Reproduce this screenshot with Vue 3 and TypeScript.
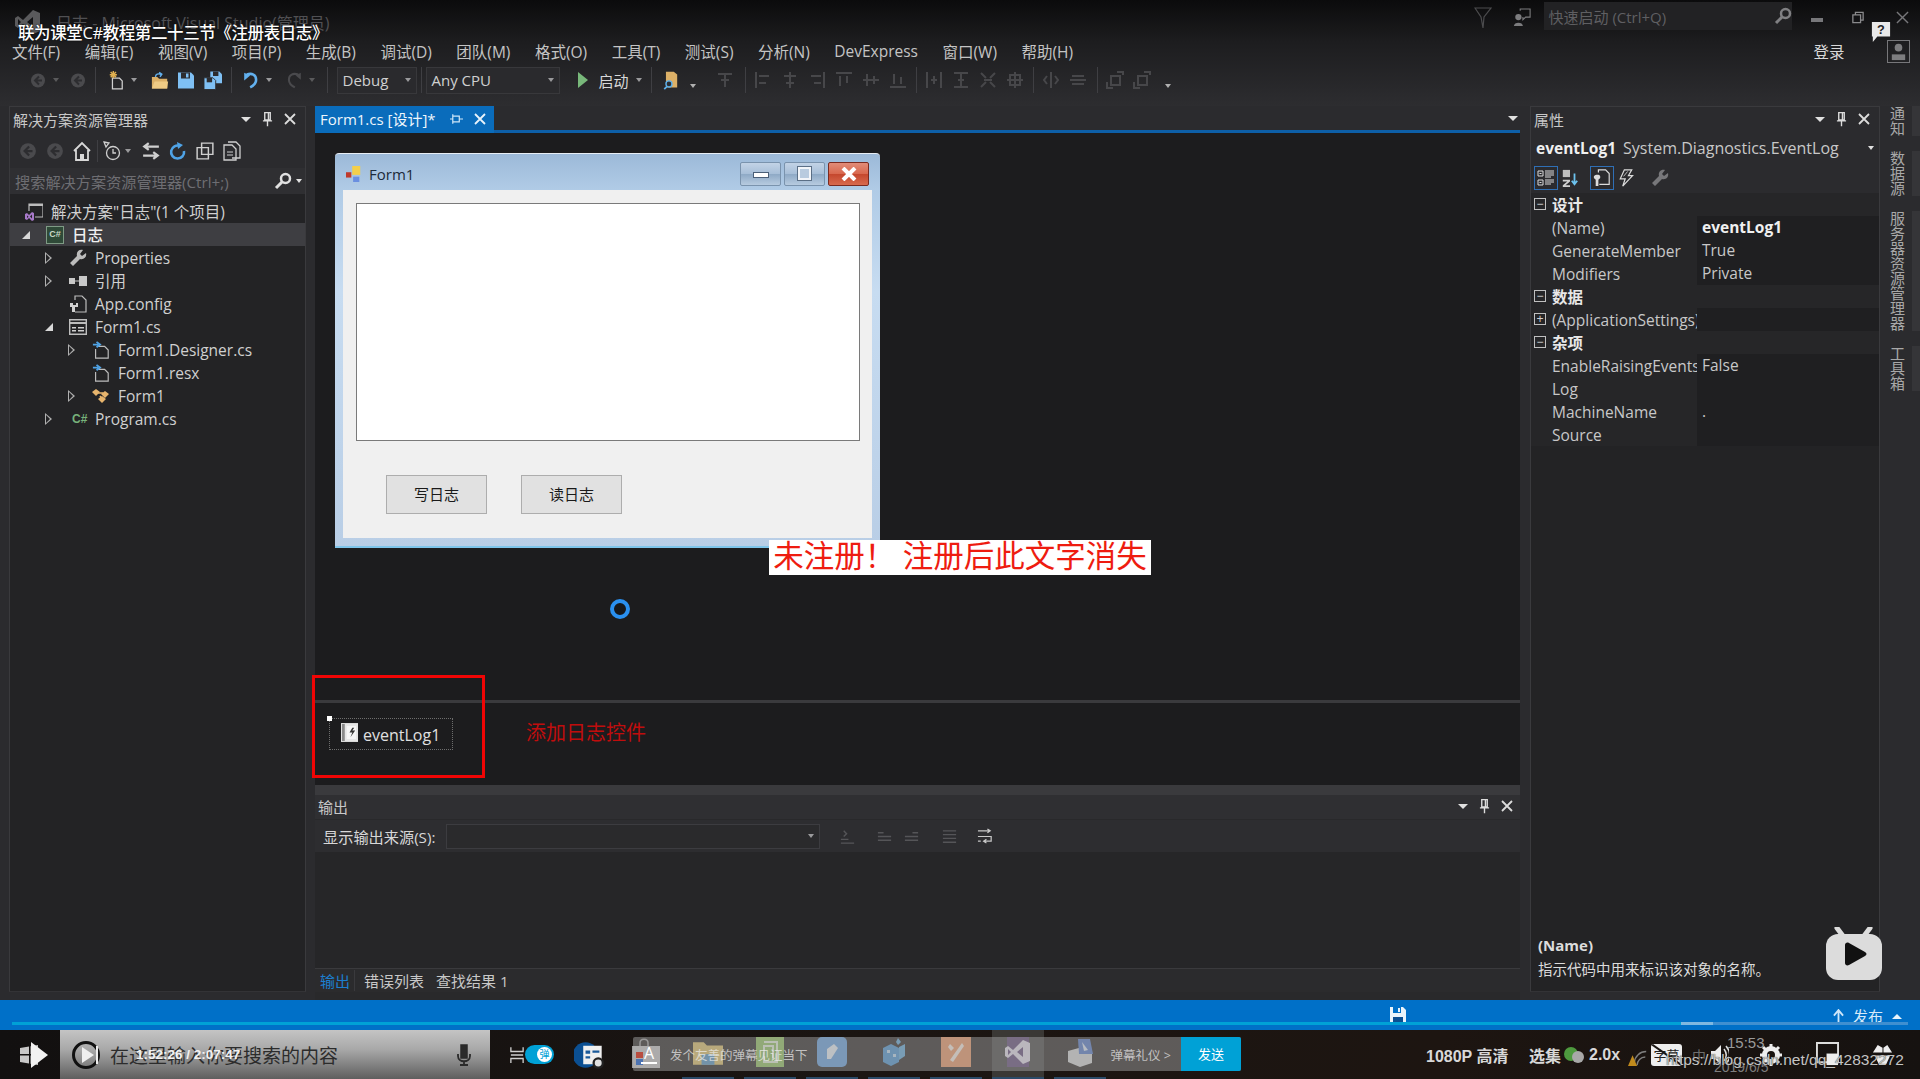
<template>
  <div class="app">
    <svg class="sprite" xmlns="http://www.w3.org/2000/svg">
      <defs>
        <symbol id="i-nav" viewBox="0 0 16 16"><circle cx="8" cy="8" r="7" fill="#4a4a4d" /><path d="M9 4 5 8l4 4M5 8h7" fill="none" stroke="#2d2d30" stroke-width="2" /></symbol>
        <symbol id="i-new" viewBox="0 0 18 22"><path d="M5 9h8l3 3v9H5z" fill="none" stroke="#d0d0d0" stroke-width="1.4" /><path d="M6 1v8M2 5h8M3 2l6 6M9 2 3 8" stroke="#e0b050" stroke-width="1.6" /></symbol>
        <symbol id="i-open" viewBox="0 0 20 20"><path d="M1 6h6l2 2h9v11H1z" fill="#dcb067" /><path d="M1 19 4 11h15l-1 8z" fill="#efcb85" /><path d="M5 6c0-3 3-4 6-3M9 1l3 2-2 3" fill="none" stroke="#62b0ee" stroke-width="1.6" /></symbol>
        <symbol id="i-save" viewBox="0 0 16 16"><path d="M0 0h13l3 3v13H0z" fill="#7fc0f4" /><path d="M3 0h9v6H3z" fill="#2d2d30" /><path d="M8 1h2.5v4H8z" fill="#7fc0f4" /></symbol>
        <symbol id="i-saveall" viewBox="0 0 20 20"><path d="M7 0h10l3 3v10H7z" fill="#7fc0f4" /><path d="M10 0h6v5h-6z" fill="#2d2d30" /><path d="M0 7h10l3 3v10H0z" fill="#7fc0f4" stroke="#2d2d30" /><path d="M3 7h6v5H3z" fill="#2d2d30" /></symbol>
        <symbol id="i-undo" viewBox="0 0 18 20"><path d="M4 3c6-2 11 0 11 6 0 4-3 7-7 9" fill="none" stroke="#62b0ee" stroke-width="3" /><path d="M1 1v9l7-6z" fill="#62b0ee" /></symbol>
        <symbol id="i-redo" viewBox="0 0 18 20"><path d="M14 3C8 1 3 3 3 9c0 4 3 7 7 9" fill="none" stroke="#4a4a4d" stroke-width="2.4" /><path d="M17 1v8l-6-5z" fill="#4a4a4d" /></symbol>
        <symbol id="i-find" viewBox="0 0 20 22"><path d="M3 1h9l4 3v15H3z" fill="#dcb067" /><circle cx="6.500" cy="15" r="3.500" fill="#2d2d30" stroke="#5ab0ee" stroke-width="1.600" /><path d="M4 18l-3 3" stroke="#5ab0ee" stroke-width="2" /></symbol>
        <symbol id="i-search" viewBox="0 0 18 18"><circle cx="11.500" cy="6.500" r="4.500" fill="none" stroke="currentColor" stroke-width="2.500" /><path d="M8 10 2 16" stroke="currentColor" stroke-width="3" /></symbol>
        <symbol id="i-pin" viewBox="0 0 12 16"><path d="M3 1h6v8H3zM1 10h10M6 10v6M7 1v8" fill="none" stroke="#dcdcdc" stroke-width="1.500" /></symbol>
        <symbol id="i-close" viewBox="0 0 12 12"><path d="M1 1l10 10M11 1 1 11" stroke="#dcdcdc" stroke-width="1.800" /></symbol>
        <symbol id="i-home" viewBox="0 0 18 20"><path d="M1 10 9 2l8 8M3 9v10h12V9" fill="none" stroke="#d8d8d8" stroke-width="1.800" /><path d="M7 13h4v6H7z" fill="#d8d8d8" /></symbol>
        <symbol id="i-history" viewBox="0 0 18 20"><circle cx="10" cy="12" r="6.500" fill="none" stroke="#cfcfcf" stroke-width="1.300" /><path d="M10 8v4h3M1 1l5 1-3 4z" fill="none" stroke="#cfcfcf" stroke-width="1.300" /></symbol>
        <symbol id="i-sync" viewBox="0 0 16 16"><path d="M15 4H3M6 1 2 4l4 3M1 12h12M10 9l4 3-4 3" fill="none" stroke="#cfcfcf" stroke-width="2" /></symbol>
        <symbol id="i-refresh" viewBox="0 0 16 20"><path d="M10 5a6.500 6.500 0 1 0 4 5" fill="none" stroke="#4fa3e6" stroke-width="2.600" /><path d="M7 1l6 3-5 4z" fill="#4fa3e6" /></symbol>
        <symbol id="i-copy" viewBox="0 0 16 16"><path d="M5 1h10v10H5zM1 5h10v10H1z" fill="#2d2d30" stroke="#cfcfcf" stroke-width="1.300" /></symbol>
        <symbol id="i-pages" viewBox="0 0 18 20"><path d="M5 1h8l4 4v12H9M1 4h8l4 4v11H1z" fill="none" stroke="#cfcfcf" stroke-width="1.300" /><path d="M4 11h6M4 14h6" stroke="#cfcfcf" /></symbol>
        <symbol id="i-wrench" viewBox="0 0 18 18"><path d="M17 4l-4 3-2-2 3-4c-4-1-7 2-6 6L1 14l3 3 7-7c4 1 7-2 6-6z" fill="currentColor" /></symbol>
        <symbol id="i-refs" viewBox="0 0 18 10"><path d="M0 2h6v6H0zM10 0h8v10h-8z" fill="#c8c8c8" /><path d="M6 5h4" stroke="#c8c8c8" /></symbol>
        <symbol id="i-config" viewBox="0 0 18 18"><path d="M6 5V1h7l4 4v12H6" fill="none" stroke="#bdbdbd" stroke-width="1.200" /><path d="M1 8h3v2h3V8h2v4H6v5H3v-5H1z" fill="#d0d0d0" /></symbol>
        <symbol id="i-form" viewBox="0 0 18 16"><path d="M.7.7h16.600v14.600H.7z" fill="none" stroke="#bdbdbd" stroke-width="1.400" /><path d="M1 3h16v2H1z" fill="#bdbdbd" /><path d="M3 8h4v1.500H3zM3 11h4v1.500H3zM9 8h6v1.500H9zM9 11h6v1.500H9z" fill="#cfcfcf" /></symbol>
        <symbol id="i-linked" viewBox="0 0 18 20"><path d="M6 6h7l4 4v9H3V9" fill="none" stroke="#bdbdbd" stroke-width="1.300" /><path d="M0 4h6M4 1l4 3-4 3" fill="none" stroke="#4fa3e6" stroke-width="2" /></symbol>
        <symbol id="i-class" viewBox="0 0 18 16"><path d="M0 4l4-3 4 3-4 4zM9 6l4-3 4 3-4 4zM6 11l4-3 4 3-4 4z" fill="#e8b56d" /><path d="M6 5h5M8 8l2 3" stroke="#e8b56d" stroke-width="1.500" /></symbol>
        <symbol id="i-sln" viewBox="0 0 18 18"><path d="M4 8V1h14v13h-8" fill="none" stroke="#bdbdbd" stroke-width="1.200" /><path d="M4 1h14v2H4z" fill="#bdbdbd" /><path d="M0 11l2-1 2 2 3-3 2 1v7l-2 1-3-3-2 2-2-1zM2 12.500v2.500l1.500-1.200zM7 11.500l-2 2 2 2z" fill="#a779c9" /></symbol>
        <symbol id="i-categorized" viewBox="0 0 18 18"><path d="M1 2h5v5H1zM1 11h5v5H1z" fill="none" stroke="#dcdcdc" /><path d="M2.500 4.500h2M2.500 13.500h2M8 2h9M8 4h9M8 6h9M8 8h6M8 11h9M8 13h9M8 15h6" stroke="#dcdcdc" /></symbol>
        <symbol id="i-alpha" viewBox="0 0 18 20"><path d="M1 1h8v8H1z" fill="#bdbdbd" /><path d="M1 12h8v2L4 18h5v2H1v-2l5-4H1z" fill="#cfcfcf" /><path d="M14 5v12M11 13l3 4 3-4" fill="none" stroke="#6cc2ee" stroke-width="2" /></symbol>
        <symbol id="i-props" viewBox="0 0 20 20"><path d="M6 4V1h8l4 4v12H7" fill="none" stroke="#dcdcdc" stroke-width="1.300" /><path d="M1 8c2-2 6-2 7 0v2L6 12v7H3v-7L1 10z" fill="#dcdcdc" /></symbol>
        <symbol id="i-bolt" viewBox="0 0 18 22"><path d="M7 1h9l-4 7h5L5 21l3-9H2z" fill="none" stroke="#dcdcdc" stroke-width="1.500" /><path d="M6 9l5-6" stroke="#dcdcdc" /></symbol>
        <symbol id="i-mic" viewBox="0 0 16 22"><path d="M5 1h6v13H5z" fill="#2a2a2a" stroke="#2a2a2a" stroke-width="1.500" /><path d="M2 10v2c0 7 12 7 12 0v-2M8 18v3M4 21h8" fill="none" stroke="#2a2a2a" stroke-width="1.800" /></symbol>
        <symbol id="i-bili" viewBox="0 0 56 54"><path d="M17 9 11 1M38 9l6-8" stroke="#dcdcdc" stroke-width="5" stroke-linecap="round" /><rect y="7" width="56" height="46" rx="12" fill="#dcdcdc" /><path d="M19 18c0-2 2-3 4-2l16 9c2 1 2 3 0 4l-16 9c-2 1-4 0-4-2z" fill="#111" /></symbol>
      </defs>
    </svg>

    <header class="chrome">
      <div class="titlebar">
        <svg class="vs-logo" viewBox="0 0 26 26"><path d="M18 1l7 3v18l-7 3-10-10-5 4-3-2V9l3-2 5 4zM18 8l-6 5 6 5zM3 10v6l3-3z" fill="#5a5a5c" /></svg>
        <span class="vs-title">日志 - Microsoft Visual Studio(管理员)</span>
        <svg class="top-ico funnel" viewBox="0 0 18 22"><path d="M1 1h16L10 10l-1 11L7 10z" fill="none" stroke="#4c4c4e" stroke-width="1.200" /></svg>
        <svg class="top-ico feedback" viewBox="0 0 20 22"><circle cx="6" cy="10" r="3.500" fill="#7d7d7f" /><path d="M1 20c0-5 10-5 10 0z" fill="#7d7d7f" /><path d="M8 3V1h11v9h-5l-3 3v-3" fill="none" stroke="#7d7d7f" stroke-width="1.200" /></svg>
        <div class="quick">
          <span>快速启动 (Ctrl+Q)</span>
          <svg class="quick-ico"><use href="#i-search" /></svg>
        </div>
        <div class="win-btns">
          <span class="w-min"></span>
          <svg class="w-restore" viewBox="0 0 14 14"><path d="M4 4V1h9v9h-3M1 4h9v9H1z" fill="none" stroke="#8a8a8c" stroke-width="1.500" /></svg>
          <svg class="w-close" viewBox="0 0 14 14"><path d="M1 1l12 12M13 1 1 13" stroke="#77777a" stroke-width="1.500" /></svg>
        </div>
      </div>
      <div class="menubar">
        <span v-for="m in menus" :key="m">{{ m }}</span>
        <span class="login">登录</span>
        <div class="avatar">
          <svg viewBox="0 0 22 22"><circle cx="11" cy="7" r="4" fill="#7d7d7f" /><path d="M4 20v-6h14v6z" fill="#7d7d7f" /></svg>
        </div>
      </div>
      <div class="toolbar">
        <svg class="ti ic16"><use href="#i-nav" /></svg><i class="drop d-dim"></i>
        <svg class="ti ic16 s6"><use href="#i-nav" /></svg>
        <b class="sep first-sep"></b>
        <svg class="ti ic-new"><use href="#i-new" /></svg><i class="drop"></i>
        <svg class="ti ic18 s9"><use href="#i-open" /></svg>
        <svg class="ti ic16 s9"><use href="#i-save" /></svg>
        <svg class="ti ic18 s10"><use href="#i-saveall" /></svg>
        <b class="sep after-save"></b>
        <svg class="ti ic16"><use href="#i-undo" /></svg><i class="drop"></i>
        <svg class="ti ic16 s9"><use href="#i-redo" /></svg><i class="drop d-dim"></i>
        <b class="sep s7"></b>
        <div class="combo c-debug"><span>Debug</span><i class="drop"></i></div>
        <b class="sep tight"></b>
        <div class="combo c-cpu"><span>Any CPU</span><i class="drop"></i></div>
        <svg class="play" viewBox="0 0 10 16"><path d="M0 0l10 8-10 8z" fill="#78b87a" /></svg>
        <span class="start">启动</span><i class="drop"></i>
        <b class="sep tight-l"></b>
        <svg class="ti ic18 s2"><use href="#i-find" /></svg>
        <i class="drop stacked"></i>
        <svg class="grey first" viewBox="0 0 18 18"><path d="M2 3h14M9 3v13M5 9h8" /></svg>
        <b class="sep g"></b>
        <svg v-for="(d, i) in alignIcons" :key="'a' + i" class="grey" viewBox="0 0 18 18"><path :d="d" /></svg>
        <b class="sep g"></b>
        <svg v-for="(d, i) in spaceIcons" :key="'s' + i" class="grey" viewBox="0 0 18 18"><path :d="d" /></svg>
        <b class="sep g"></b>
        <svg class="grey" viewBox="0 0 18 18"><path d="M9 1v16M5 5l-3 4 3 4M13 5l3 4-3 4" /></svg>
        <svg class="grey wide" viewBox="0 0 18 18"><path d="M1 9h16M3 5h12M3 13h12" /></svg>
        <b class="sep g"></b>
        <svg class="grey" viewBox="0 0 18 18"><path d="M5 5h9v9H5zM1 11v6h6M11 1h6v3" /></svg>
        <svg class="grey wide" viewBox="0 0 18 18"><path d="M5 5h9v9H5zM1 11v6h6M11 1h6v3" /></svg>
        <i class="drop stacked last"></i>
      </div>
    </header>

    <main class="workspace">
      <!-- 解决方案资源管理器 -->
      <aside class="panel explorer">
        <div class="panel-head">
          <span class="head-title">解决方案资源管理器</span>
          <i class="drop white"></i>
          <svg class="head-pin"><use href="#i-pin" /></svg>
          <svg class="head-x"><use href="#i-close" /></svg>
        </div>
        <div class="ex-tools">
          <svg class="ex-i"><use href="#i-nav" /></svg>
          <svg class="ex-i"><use href="#i-nav" /></svg>
          <svg class="ex-i"><use href="#i-home" /></svg>
          <b class="sep short"></b>
          <svg class="ex-i"><use href="#i-history" /></svg><i class="drop"></i>
          <svg class="ex-i"><use href="#i-sync" /></svg>
          <svg class="ex-i"><use href="#i-refresh" /></svg>
          <svg class="ex-i"><use href="#i-copy" /></svg>
          <svg class="ex-i"><use href="#i-pages" /></svg>
        </div>
        <div class="ex-search">
          <span>搜索解决方案资源管理器(Ctrl+;)</span>
          <svg class="ex-search-i"><use href="#i-search" /></svg>
          <i class="drop"></i>
        </div>
        <ul class="tree">
          <li
            v-for="n in tree"
            :key="n.label"
            :class="['tree-row', { selected: n.selected, root: n.level < 0 }]"
            :style="{ paddingLeft: n.level < 0 ? '0' : 12 + 23 * n.level + 'px' }"
          >
            <span class="arrow">
              <i v-if="n.arrow === 'open'" class="tri-open"></i>
              <i v-else-if="n.arrow === 'closed'" class="tri-closed"></i>
            </span>
            <span class="node-ico">
              <span v-if="n.icon === 'cs'" class="cs-text">C#</span>
              <span v-else-if="n.icon === 'proj'" class="cs-box">C#</span>
              <svg v-else><use :href="'#i-' + n.icon" /></svg>
            </span>
            <span class="node-label">{{ n.label }}</span>
          </li>
        </ul>
      </aside>

      <!-- 设计器和输出 -->
      <section class="center">
        <div class="tabs">
          <div class="tab">
            <span>Form1.cs [设计]*</span>
            <svg class="tab-pin" viewBox="0 0 14 12"><path d="M3 1v10M3 6H0M3 3h7v6H3M10 6h4" fill="none" stroke="#cfe6f8" stroke-width="1.300" /></svg>
            <svg class="tab-x" viewBox="0 0 12 12"><path d="M1 1l10 10M11 1 1 11" stroke="#e8f3fb" stroke-width="1.800" /></svg>
          </div>
          <i class="drop white tabs-drop"></i>
        </div>
        <div class="designer">
          <div class="form">
            <div class="form-title">
              <svg class="form-ico" viewBox="0 0 18 18"><path d="M0 7h6v6H0z" fill="#c0392b" /><path d="M7 0h9v10H7z" fill="#f4cf4a" /><path d="M8 12h7v6H8z" fill="#6a8fe0" /></svg>
              <span>Form1</span>
              <div class="form-btns">
                <div class="fb"><i class="fb-min"></i></div>
                <div class="fb"><i class="fb-max"></i></div>
                <div class="fb fb-close">
                  <svg viewBox="0 0 16 14"><path d="M2 1l12 12M14 1 2 13" stroke="#fff" stroke-width="4" /></svg>
                </div>
              </div>
            </div>
            <div class="form-client">
              <div class="textbox"></div>
              <div class="form-actions">
                <button class="win-btn" type="button">写日志</button>
                <button class="win-btn" type="button">读日志</button>
              </div>
            </div>
          </div>
          <div class="watermark">未注册！ 注册后此文字消失</div>
          <div class="spinner"></div>
        </div>
        <div class="tray">
          <div class="tray-item">
            <i class="handle"></i>
            <svg class="log-ico" viewBox="0 0 18 20"><path d="M0 0h18v20H0z" fill="#e6e6e6" /><path d="M1 1h3v18H1z" fill="#8a8a8a" /><path d="M6 3h10v14H6z" fill="#f6f6f6" /><path d="M12 5 9 10h3l-2 5 5-7h-3l2-3z" fill="#333" /></svg>
            <span>eventLog1</span>
          </div>
          <span class="tray-note">添加日志控件</span>
          <div class="red-box"></div>
        </div>
        <div class="output">
          <div class="output-head">
            <span class="head-title">输出</span>
            <i class="drop white"></i>
            <svg class="head-pin"><use href="#i-pin" /></svg>
            <svg class="head-x"><use href="#i-close" /></svg>
          </div>
          <div class="output-tools">
            <span class="src-label">显示输出来源(S):</span>
            <div class="src-combo"><i class="drop"></i></div>
            <svg class="out-i o1" viewBox="0 0 18 18"><path d="M2 16h14M2 12h8M5 3l3 3-3 3" fill="none" stroke="#555558" stroke-width="1.500" /></svg>
            <svg class="out-i o2" viewBox="0 0 18 18"><path d="M2 5h6M2 9h14M2 13h14" stroke="#555558" stroke-width="1.500" /></svg>
            <svg class="out-i o3" viewBox="0 0 18 18"><path d="M10 5h6M2 9h14M2 13h14" stroke="#555558" stroke-width="1.500" /></svg>
            <svg class="out-i o4" viewBox="0 0 18 18"><path d="M2 3h14M2 7h14M2 11h14M2 15h14" stroke="#555558" stroke-width="1.500" /></svg>
            <svg class="out-i o5" viewBox="0 0 18 18"><path d="M1 3h13M11 1l3 2-3 2M1 9h14v5H8M10 12l-3 2 3 2M1 14h3" fill="none" stroke="#c8c8c8" stroke-width="1.300" /></svg>
          </div>
          <div class="output-body"></div>
          <div class="output-tabs">
            <span class="out-active">输出</span>
            <span>错误列表</span>
            <span>查找结果 1</span>
          </div>
        </div>
      </section>

      <!-- 属性 -->
      <aside class="panel props">
        <div class="panel-head">
          <span class="head-title">属性</span>
          <i class="drop white"></i>
          <svg class="head-pin"><use href="#i-pin" /></svg>
          <svg class="head-x"><use href="#i-close" /></svg>
        </div>
        <div class="obj-line">
          <b>eventLog1</b>
          <span>System.Diagnostics.EventLog</span>
          <i class="drop white"></i>
        </div>
        <div class="prop-tools">
          <span class="pt on"><svg><use href="#i-categorized" /></svg></span>
          <span class="pt"><svg><use href="#i-alpha" /></svg></span>
          <span class="pt on gap"><svg><use href="#i-props" /></svg></span>
          <span class="pt"><svg><use href="#i-bolt" /></svg></span>
          <span class="pt dim gap"><svg><use href="#i-wrench" /></svg></span>
        </div>
        <div class="grid">
          <div v-for="r in propRows" :key="r.name" :class="['prop-row', { section: r.section }]">
            <span v-if="r.expander" class="expander">{{ r.expander }}</span>
            <span class="prop-name">{{ r.name }}</span>
            <span v-if="!r.section" :class="['prop-value', { strong: r.strong }]">{{ r.value }}</span>
          </div>
        </div>
        <div class="prop-desc">
          <b>(Name)</b>
          <span>指示代码中用来标识该对象的名称。</span>
        </div>
      </aside>

      <nav class="side-tabs">
        <div v-for="t in sideTabs" :key="t" class="side-tab">{{ t }}</div>
      </nav>
    </main>

    <footer class="statusbar">
      <svg class="status-save" viewBox="0 0 18 16"><path d="M1 0h13l3 3v13H1z" fill="#eaf4fb" /><path d="M4 0h8v6H4z" fill="#0070c8" /><path d="M9 1h2v4H9z" fill="#eaf4fb" /><path d="M4 10h10v6H4z" fill="#0b4f92" /></svg>
      <svg class="status-up" viewBox="0 0 12 16"><path d="M6 16V2M1 7l5-6 5 6" fill="none" stroke="#cfe6f8" stroke-width="2" /></svg>
      <span class="publish">发布</span>
      <i class="status-tri"></i>
      <div class="progress">
        <div class="p-played"></div>
        <div class="p-peek"></div>
        <div class="p-rest"></div>
      </div>
    </footer>

    <div class="taskbar">
      <svg class="start-win" viewBox="0 0 30 30"><path d="M1 8l9-1.500v7.500H1zM11.500 6.300 19 5v9h-7.500zM1 15.500h9v8L1 22zM11.500 15.500H19V25l-7.500-1.300z" fill="#c8c8c8" /><path d="M12 2l17 13-17 13z" fill="#f2f2f2" /></svg>
      <div class="search-box">
        <svg class="big-play" viewBox="0 0 30 30"><circle cx="15" cy="15" r="12.500" fill="none" stroke="#111" stroke-width="3" /><path d="M11 7l12 8-12 8z" fill="#efefef" /><path d="M26 6v18" stroke="#eee" stroke-width="2" /></svg>
        <span class="search-text">在这里输入你要搜索的内容</span>
        <svg class="mic"><use href="#i-mic" /></svg>
      </div>
      <svg class="task-view" viewBox="0 0 16 20"><path d="M1 1v5h14V1M1 19v-5h14v5M1 10h14" fill="none" stroke="#cfcfcf" stroke-width="1.500" /></svg>
      <div class="dm-toggle"><span>弹</span></div>
      <svg class="settings-ico" viewBox="0 0 26 26"><circle cx="10" cy="13" r="11" fill="#0b4f92" /><path d="M8 5h16v16H8z" fill="#f0f0f0" /><path d="M10 9h4v3h-4zM10 14h4v2h-4zM16 9h6v2h-6z" fill="#1a5a9a" /><circle cx="21" cy="20" r="4" fill="#e0e0e0" stroke="#222" stroke-width="2" /></svg>
      <div class="slots">
        <div class="slot">
          <svg viewBox="0 0 28 24"><path d="M0 3h10l3 3h15v18H0z" fill="#e3c25e" /><path d="M8 14h12v10H8z" fill="#4a90c2" /></svg>
        </div>
        <div class="slot">
          <svg viewBox="0 0 28 30"><path d="M0 0h28v30H0z" fill="#8cc152" /><path d="M8 5h13v20H8V9h9v12" fill="none" stroke="#e8f4da" stroke-width="2" /></svg>
        </div>
        <div class="slot">
          <svg viewBox="0 0 30 30"><rect width="30" height="30" rx="5" fill="#5b9bdf" /><path d="M10 22V12l7-5 4 4-7 11z" fill="#eef4fb" /></svg>
        </div>
        <div class="slot">
          <svg viewBox="0 0 30 30"><path d="M4 11l8-4 8 4v14l-8 4-8-4z" fill="#3f8fd0" /><path d="M20 10l6-3v12l-6 4zM19 1l3 4-3 3-2-3z" fill="#58a6dc" /><path d="M8 13h3v3H8zM14 17h3v3h-3z" fill="#bcdcf2" /></svg>
        </div>
        <div class="slot">
          <svg viewBox="0 0 30 30"><path d="M0 0h30v30H0z" fill="#f0915a" /><path d="M9 7l4 4-3 3-3-4zM21 6l2 3-11 16-3-2z" fill="#fdf0e4" /></svg>
        </div>
        <div class="slot current">
          <svg viewBox="0 0 26 30"><path d="M2 0h22v30H2z" fill="#6c3f96" opacity=".6" /><path d="M18 3l7 3v18l-7 3-10-10-5 4-3-2V11l3-2 5 4zM18 10l-6 5 6 5zM3 12v6l3-3z" fill="#e6e0ee" /></svg>
        </div>
        <div class="slot">
          <svg viewBox="0 0 30 30"><path d="M3 14l18-5 6 5v12l-12 4-12-5z" fill="#d8d8d8" /><path d="M13 2h12l3 15H14z" fill="#4a72c8" /><path d="M17 5l2 9 4-1z" fill="#dfe8f8" /></svg>
        </div>
      </div>

      <!-- 系统托盘，被播放器控件盖住 -->
      <div class="tray-dots"><i class="dot-green"></i><i class="dot-grey"></i></div>
      <svg class="wifi" viewBox="0 0 22 22"><path d="M10 20a9 9 0 0 1 9-9M7 17a13 13 0 0 1 13-12" fill="none" stroke="#7e7e7e" stroke-width="1.500" /><path d="M5 9 0 21h10z" fill="#c08a1c" /></svg>
      <span class="ime">中</span>

      <!-- 播放器控件盖在视频上 -->
      <div class="time-label">1:52:26 / 2:07:47</div>
      <div class="dm-input">
        <svg class="dm-bag" viewBox="0 0 28 30"><path d="M8 8V5c0-5 8-5 8 0v3" fill="none" stroke="#a8a8a8" stroke-width="1.500" /><path d="M0 8h28v22H0z" fill="#c0c0c0" /><path d="M4 14h7v6H4z" fill="#d04a3a" /><path d="M4 21h7v6H4z" fill="#4a7ac8" /></svg>
        <span class="dm-a">A</span>
        <span class="dm-hint">发个友善的弹幕见证当下</span>
        <span class="dm-rule">弹幕礼仪 &gt;</span>
        <span class="dm-send">发送</span>
      </div>
      <div class="player-right">
        <span class="pr-text q">1080P 高清</span>
        <span class="pr-text ep">选集</span>
        <span class="pr-text speed">2.0x</span>
        <div class="pr-sub"><span>字幕</span><i></i></div>
        <svg class="pr-vol" viewBox="0 0 18 24"><path d="M0 8h4l6-6v20l-6-6H0z" fill="#eee" /><path d="M13 6c3 4 3 8 0 12M15 3c5 6 5 12 0 18" fill="none" stroke="#ddd" stroke-width="1.500" /></svg>
        <svg class="pr-gear" viewBox="0 0 22 22"><circle cx="11" cy="11" r="6.500" fill="none" stroke="#eee" stroke-width="5" /><path d="M11 0v4M11 18v4M0 11h4M18 11h4M3 3l3 3M16 16l3 3M19 3l-3 3M6 16l-3 3" stroke="#eee" stroke-width="3" /></svg>
        <svg class="pr-pip" viewBox="0 0 24 26"><path d="M1 1h22v20H1z" fill="none" stroke="#ddd" stroke-width="2" /><path d="M11 12h12v12H11z" fill="#eee" /></svg>
        <svg class="pr-full" viewBox="0 0 24 24"><path d="M2 10 7 2l5 3V10zM13 5l4-3 5 8h-9zM4 13h16l-4 9H8z" fill="#eee" /></svg>
      </div>
      <span class="clock">15:53</span>
      <span class="clock-date">2019/6/5</span>
      <span class="blog-url">https://blog.csdn.net/qq_42832272</span>
    </div>

    <!-- 视频标题叠加层 -->
    <div class="video-title">联为课堂C#教程第二十三节《注册表日志》</div>
    <svg class="help-bubble" viewBox="0 0 20 22"><path d="M0 0h20v16H6l-5 6v-6H0z" fill="#e8e8e8" /><text x="10" y="13" text-anchor="middle" font-size="14" font-weight="700" fill="#222" font-family="Liberation Sans">?</text></svg>
    <svg class="bili"><use href="#i-bili" /></svg>
  </div>
</template>

<script setup lang="ts">
interface TreeNode {
  label: string
  level: number
  icon: string
  arrow?: 'open' | 'closed'
  selected?: boolean
}

interface PropRow {
  name: string
  value?: string
  section?: boolean
  expander?: string
  strong?: boolean
}

const menus = [
  '文件(F)', '编辑(E)', '视图(V)', '项目(P)', '生成(B)', '调试(D)', '团队(M)',
  '格式(O)', '工具(T)', '测试(S)', '分析(N)', 'DevExpress', '窗口(W)', '帮助(H)'
]

const alignIcons = [
  'M2 1v16M5 5h10M5 12h7', 'M9 1v16M3 5h12M5 12h8', 'M16 1v16M3 5h10M6 12h7',
  'M1 2h16M5 5v10M12 5v7', 'M1 9h16M5 3v12M12 5v8', 'M1 16h16M5 3v10M12 6v7'
]

const spaceIcons = [
  'M2 1v16M16 1v16M9 5v8M6 9h6', 'M2 2h14M2 16h14M9 2v14M6 9h6',
  'M2 2l5 5M16 2l-5 5M2 16l5-5M16 16l-5-5M5 9h8', 'M4 4h10v10H4zM9 1v16M1 9h16'
]

const tree: TreeNode[] = [
  { label: '解决方案"日志"(1 个项目)', level: -1, icon: 'sln' },
  { label: '日志', level: 0, icon: 'proj', arrow: 'open', selected: true },
  { label: 'Properties', level: 1, icon: 'wrench', arrow: 'closed' },
  { label: '引用', level: 1, icon: 'refs', arrow: 'closed' },
  { label: 'App.config', level: 1, icon: 'config' },
  { label: 'Form1.cs', level: 1, icon: 'form', arrow: 'open' },
  { label: 'Form1.Designer.cs', level: 2, icon: 'linked', arrow: 'closed' },
  { label: 'Form1.resx', level: 2, icon: 'linked' },
  { label: 'Form1', level: 2, icon: 'class', arrow: 'closed' },
  { label: 'Program.cs', level: 1, icon: 'cs', arrow: 'closed' }
]

const propRows: PropRow[] = [
  { name: '设计', section: true, expander: '−' },
  { name: '(Name)', value: 'eventLog1', strong: true },
  { name: 'GenerateMember', value: 'True' },
  { name: 'Modifiers', value: 'Private' },
  { name: '数据', section: true, expander: '−' },
  { name: '(ApplicationSettings)', value: '', expander: '+' },
  { name: '杂项', section: true, expander: '−' },
  { name: 'EnableRaisingEvents', value: 'False' },
  { name: 'Log', value: '' },
  { name: 'MachineName', value: '.' },
  { name: 'Source', value: '' }
]

const sideTabs = ['通知', '数据源', '服务器资源管理器', '工具箱']
</script>

<style>
html,
body {
  margin: 0;
  background: #2d2d30;
}
</style>

<style scoped>
* {
  box-sizing: border-box;
}

.sprite {
  display: none;
}

.app {
  position: relative;
  display: flex;
  flex-direction: column;
  width: 1920px;
  height: 1079px;
  overflow: hidden;
  background: #2b2b2e;
  color: #c8c8c8;
  font-family: "Open Sans", "Noto Sans CJK SC", sans-serif;
  font-size: 15.500px;
}

/* ---------- 顶部 ---------- */
.chrome {
  height: 106px;
  flex: none;
  background: linear-gradient(#0b0b0c, #1d1d1f 40%, #2d2d30 100%);
}

.titlebar {
  position: relative;
  display: flex;
  align-items: flex-start;
  height: 39px;
  padding-left: 15px;
}

.vs-logo {
  width: 26px;
  height: 26px;
  margin-top: 9px;
}

.vs-title {
  margin: 10px 0 0 15px;
  font-size: 16px;
  color: #505053;
  white-space: nowrap;
}

.top-ico {
  width: 18px;
  height: 22px;
  margin-top: 7px;
}

.funnel {
  margin-left: 1144px;
}

.feedback {
  margin-left: 21px;
}

.quick {
  display: flex;
  align-items: center;
  justify-content: space-between;
  width: 248px;
  height: 28px;
  margin: 2px 0 0 13px;
  padding: 0 0 0 5px;
  color: #5f5f62;
  font-size: 15px;
  background: #222224;
}

.quick-ico {
  width: 18px;
  height: 18px;
  color: #808083;
}

.win-btns {
  display: flex;
  align-items: center;
  height: 28px;
  margin: 3px 0 0 19px;
}

.w-min {
  width: 12px;
  height: 4px;
  margin-top: 6px;
  background: #77777a;
}

.w-restore {
  width: 12px;
  height: 13px;
  margin-left: 29px;
}

.w-close {
  width: 13px;
  height: 13px;
  margin-left: 32px;
}

.menubar {
  display: flex;
  align-items: center;
  gap: 24.500px;
  height: 24px;
  padding: 0 10px 0 12px;
  font-size: 15.500px;
  color: #c4c4c4;
  white-space: nowrap;
}

.login {
  margin-left: auto;
  color: #d8d8d8;
}

.avatar {
  width: 23px;
  height: 23px;
  margin-left: 18px;
  border: 1px solid #77777a;
}

.avatar svg {
  display: block;
  width: 100%;
  height: 100%;
}

.toolbar {
  display: flex;
  align-items: center;
  height: 34px;
  padding-left: 30px;
  white-space: nowrap;
}

.ti {
  flex: none;
}

.ic16 {
  width: 16px;
  height: 17px;
}

.ic18 {
  width: 18px;
  height: 19px;
}

.ic-new {
  width: 16px;
  height: 20px;
}

.s2 {
  margin-left: 2px;
}

.s6 {
  margin-left: 6px;
}

.s9 {
  margin-left: 9px;
}

.s10 {
  margin-left: 10.500px;
}

.drop {
  display: inline-block;
  flex: none;
  width: 0;
  height: 0;
  margin: 0 5px 0 7px;
  border-left: 3.500px solid transparent;
  border-right: 3.500px solid transparent;
  border-top: 4px solid #9a9a9c;
}

.d-dim {
  border-top-color: #5a5a5c;
}

.drop.white {
  border-left-width: 5px;
  border-right-width: 5px;
  border-top: 5px solid #e0e0e0;
}

.stacked {
  margin-top: 12px;
  margin-left: 9px;
  border-top-color: #b0b0b0;
}

.sep {
  flex: none;
  width: 1px;
  height: 26px;
  margin: 0 9px;
  background: #3f3f43;
}

.first-sep {
  margin-right: 11.500px;
}

.after-save {
  margin-right: 10.500px;
}

.sep.s7 {
  margin-left: 7px;
}

.sep.tight {
  margin: 0 4px;
}

.sep.tight-l {
  margin-left: 4px;
}

.sep.short {
  height: 22px;
  margin: 0 -3.500px;
}

.sep.g {
  margin: 0 8px 0 0;
}

.combo {
  display: flex;
  align-items: center;
  justify-content: space-between;
  height: 27px;
  padding: 0 0 0 5px;
  color: #d0d0d0;
  font-size: 15px;
  background: #2a2a2d;
  border: 1px solid #38383b;
}

.c-debug {
  width: 80px;
}

.c-cpu {
  width: 134px;
}

.play {
  flex: none;
  width: 10px;
  height: 16px;
  margin-left: 18px;
}

.start {
  margin-left: 11px;
  color: #d8d8d8;
  font-size: 15px;
}

.grey {
  flex: none;
  width: 18px;
  height: 18px;
  margin-right: 9px;
  fill: none;
  stroke: #47474a;
  stroke-width: 2;
}

.grey.first {
  margin-left: 15px;
  margin-right: 11px;
}

.grey.wide {
  margin-right: 10px;
}

.last {
  margin-left: 4px;
}

/* ---------- 主区域 ---------- */
.workspace {
  display: flex;
  flex: none;
  height: 894px;
  padding-left: 9px;
}

.panel {
  display: flex;
  flex-direction: column;
  flex: none;
  height: 886px;
  background: #252527;
  border: 1px solid #3a3a3d;
  border-bottom-color: #333336;
}

.panel-head,
.output-head {
  display: flex;
  align-items: center;
  flex: none;
  height: 26px;
  padding: 0 9px 2px 3px;
  background: #2b2b2e;
}

.head-title {
  flex: 1;
  color: #c8c8c8;
  font-size: 15px;
}

.panel-head .drop,
.output-head .drop {
  margin: 0;
}

.head-pin {
  width: 11px;
  height: 16px;
  margin-left: 11px;
}

.head-x {
  width: 12px;
  height: 12px;
  margin-left: 11px;
}

.explorer {
  width: 297px;
  background: #232325;
}

.ex-tools {
  display: flex;
  align-items: center;
  gap: 9px;
  flex: none;
  height: 35px;
  padding-left: 9px;
  background: #2b2b2e;
}

.ex-tools .drop {
  margin: 0 2px 0 -5px;
}

.ex-i {
  width: 18px;
  height: 20px;
  flex: none;
}

.ex-search {
  display: flex;
  align-items: center;
  flex: none;
  height: 26px;
  padding-left: 5px;
  color: #6e6e72;
  font-size: 15.200px;
  white-space: nowrap;
  background: #2f2f32;
}

.ex-search span {
  flex: 1;
}

.ex-search-i {
  width: 18px;
  height: 18px;
  color: #e0e0e0;
}

.ex-search .drop {
  margin: 0 3px 0 4px;
  border-top-color: #e0e0e0;
}

.tree {
  margin: 6px 0 0;
  padding: 0;
  list-style: none;
}

.tree-row {
  display: flex;
  align-items: center;
  height: 23px;
  color: #d0d0d0;
  white-space: nowrap;
}

.tree-row.selected {
  background: #3e3e42;
  color: #f0f0f0;
  font-weight: 500;
}

.arrow {
  display: flex;
  align-items: center;
  flex: none;
  width: 24px;
}

.root .arrow {
  width: 15px;
}

.tri-open {
  width: 0;
  height: 0;
  border-left: 8px solid transparent;
  border-bottom: 8px solid #d8d8d8;
}

.tri-closed {
  width: 0;
  height: 0;
  border-top: 6px solid transparent;
  border-bottom: 6px solid transparent;
  border-left: 7px solid #b0b0b0;
  position: relative;
}

.tri-closed::after {
  content: "";
  position: absolute;
  top: -4px;
  left: -6px;
  border-top: 4px solid transparent;
  border-bottom: 4px solid transparent;
  border-left: 4.500px solid #232325;
}

.node-ico {
  display: flex;
  align-items: center;
  flex: none;
  width: 26px;
  height: 20px;
  color: #bcbcbc;
}

.node-ico svg {
  width: 18px;
  height: 18px;
}

.cs-text {
  margin-left: 3px;
  color: #77b27b;
  font: 700 12px "Liberation Sans", sans-serif;
}

.cs-box {
  display: block;
  width: 18px;
  height: 18px;
  color: #c8d8c8;
  font: 700 9px/15px "Liberation Sans", sans-serif;
  text-align: center;
  background: #2f4a38;
  border: 1px solid #7f9b85;
}

.center {
  display: flex;
  flex-direction: column;
  flex: none;
  width: 1205px;
  margin-left: 9px;
}

.tabs {
  display: flex;
  align-items: center;
  justify-content: space-between;
  flex: none;
  height: 27px;
  border-bottom: 3px solid #0d5fa8;
  padding-right: 2px;
}

.tab {
  display: flex;
  align-items: center;
  width: 179px;
  height: 27px;
  margin-bottom: -3px;
  padding: 0 0 2px 5px;
  color: #eef6fc;
  font-size: 15px;
  background: #0a6cbb;
  white-space: nowrap;
}

.tab-pin {
  width: 13px;
  height: 12px;
  margin-left: 14px;
}

.tab-x {
  width: 12px;
  height: 12px;
  margin-left: 11px;
}

.tabs-drop {
  margin: 0;
}

.designer {
  position: relative;
  flex: none;
  height: 570px;
  padding: 20px 20px;
  background: #1c1c1e;
  border-bottom: 3px solid #3a3a3d;
}

.form {
  display: flex;
  flex-direction: column;
  width: 545px;
  height: 395px;
  padding: 0 8px 8px;
  border-radius: 4px 4px 0 0;
  background: linear-gradient(#9cb9d8, #b0cbe6 9%, #c7dcf1 35%, #b9cee6 100%);
  border-top: 1px solid #e8eef5;
  border-bottom: 2px solid #7fc5ea;
}

.form-title {
  display: flex;
  align-items: center;
  flex: none;
  height: 36px;
  padding: 4px 3px 0;
  color: #1c2a3a;
  font-size: 15px;
}

.form-ico {
  width: 16px;
  height: 16px;
}

.form-title > span {
  margin-left: 7px;
}

.form-btns {
  display: flex;
  gap: 3px;
  margin-left: auto;
  margin-top: -1px;
}

.fb {
  display: flex;
  align-items: center;
  justify-content: center;
  width: 41px;
  height: 24px;
  border: 1px solid #7a93ad;
  border-radius: 2px;
  background: linear-gradient(#c2d3e6, #a8bfd8 48%, #8faac6 52%, #b7cbe0);
}

.fb-min {
  width: 16px;
  height: 6px;
  margin-top: 2px;
  background: #fff;
  border: 1px solid #4a5f78;
}

.fb-max {
  width: 13px;
  height: 13px;
  background: #b8cbdf;
  border: 2px solid #f2f5f9;
  outline: 1px solid #5b6f86;
}

.fb-close {
  background: linear-gradient(#e28c78, #d9694f 48%, #c5482e 52%, #d86a4e);
  border-color: #7a2a20;
}

.fb-close svg {
  width: 16px;
  height: 14px;
}

.form-client {
  display: flex;
  flex-direction: column;
  flex: 1;
  padding: 13px 13px 0;
  background: #f0f0f0;
}

.textbox {
  flex: none;
  width: 504px;
  height: 238px;
  background: #fff;
  border: 1px solid #7a7a7a;
}

.form-actions {
  display: flex;
  gap: 34px;
  margin: 34px 0 0 30px;
}

.win-btn {
  width: 101px;
  height: 39px;
  padding: 0 0 3px;
  color: #1a1a1a;
  font: 15px "Noto Sans CJK SC", sans-serif;
  background: #e1e1e1;
  border: 1px solid #adadad;
}

.watermark {
  position: absolute;
  left: 454px;
  top: 407px;
  width: 382px;
  height: 35px;
  color: #ee1c10;
  font: 400 30.500px/35px "Liberation Serif", "Noto Sans CJK SC", serif;
  text-align: center;
  white-space: nowrap;
  background: #fff;
}

.spinner {
  position: absolute;
  left: 295px;
  top: 466px;
  width: 20px;
  height: 20px;
  border: 4.500px solid #2a90f0;
  border-radius: 50%;
  background: #16181c;
}

.tray {
  position: relative;
  display: flex;
  align-items: flex-start;
  flex: none;
  height: 92px;
  background: #1c1c1e;
  border-bottom: 10px solid #3a3a3d;
}

.tray-item {
  position: relative;
  display: flex;
  align-items: center;
  width: 124px;
  height: 32px;
  margin: 15px 0 0 14px;
  padding-left: 11px;
  color: #e0e0e0;
  font-size: 16px;
  border: 1px dotted #6e6e6e;
}

.tray-item span {
  margin: 2px 0 0 5px;
}

.handle {
  position: absolute;
  left: -3px;
  top: -3px;
  width: 5px;
  height: 5px;
  background: #fff;
}

.log-ico {
  width: 17px;
  height: 19px;
  margin-top: -4px;
}

.tray-note {
  margin: 16px 0 0 73px;
  color: #c00d0d;
  font: 400 20px/28px "Liberation Serif", "Noto Sans CJK SC", serif;
}

.red-box {
  position: absolute;
  left: -3px;
  top: -28px;
  width: 173px;
  height: 103px;
  border: 3px solid #f00505;
}

.output {
  display: flex;
  flex-direction: column;
  flex: 1;
  background: #29292b;
}

.output-head {
  height: 24px;
  padding-right: 7px;
  background: #2f2f32;
}

.output-tools {
  display: flex;
  align-items: center;
  flex: none;
  height: 32px;
  margin-top: 1px;
  padding-left: 8px;
  background: #2d2d30;
}

.src-label {
  width: 123px;
  color: #d8d8d8;
  font-size: 15.200px;
  white-space: nowrap;
}

.src-combo {
  display: flex;
  align-items: center;
  justify-content: flex-end;
  width: 374px;
  height: 25px;
  background: #2a2a2c;
  border: 1px solid #3c3c40;
}

.src-combo .drop {
  margin: 0 5px 0 0;
}

.out-i {
  width: 17px;
  height: 17px;
}

.o1 {
  margin-left: 19px;
}

.o2 {
  margin-left: 20px;
}

.o3 {
  margin-left: 10px;
}

.o4 {
  margin-left: 21px;
}

.o5 {
  margin-left: 19px;
}

.output-body {
  flex: 1;
  background: #262628;
}

.output-tabs {
  display: flex;
  align-items: center;
  gap: 12px;
  flex: none;
  height: 24px;
  padding-left: 5px;
  color: #c8c8c8;
  font-size: 15px;
  background: #2b2b2d;
  border-top: 1px solid #3a3a3d;
  margin-bottom: 8px;
}

.out-active {
  margin-right: -3px;
  padding-right: 4px;
  color: #1c7fd0;
  border-right: 1px solid #3a3a3d;
}

.props {
  width: 350px;
  margin-left: 10px;
  background: #232325;
}

.obj-line {
  display: flex;
  align-items: center;
  flex: none;
  height: 29px;
  padding: 0 5px 0 5px;
  background: #2b2b2e;
  white-space: nowrap;
}

.obj-line b {
  color: #f0f0f0;
  font-weight: 700;
  font-size: 15.500px;
}

.obj-line span {
  flex: 1;
  margin-left: 7px;
  color: #c8c8c8;
  font-size: 16px;
}

.obj-line .drop {
  margin: 0;
  border-left-width: 3.500px;
  border-right-width: 3.500px;
  border-top-width: 4px;
}

.prop-tools {
  display: flex;
  align-items: center;
  flex: none;
  gap: 0;
  height: 31px;
  padding-left: 3px;
  background: #2b2b2e;
}

.pt {
  display: flex;
  align-items: center;
  justify-content: center;
  width: 24px;
  height: 24px;
  color: #cfcfcf;
  border: 1px solid transparent;
}

.pt.on {
  border-color: #2f6fb5;
}

.pt.gap {
  margin-left: 8px;
}

.pt.dim {
  margin-left: 10px;
  color: #77777a;
}

.pt svg {
  width: 18px;
  height: 18px;
}

.grid {
  flex: none;
}

.prop-row {
  display: flex;
  position: relative;
  align-items: center;
  height: 23px;
  padding-left: 21px;
  background: #262628;
  white-space: nowrap;
}

.prop-row.section {
  color: #e0e0e0;
  font-weight: 700;
}

.expander {
  position: absolute;
  left: 3px;
  top: 5px;
  width: 12px;
  height: 12px;
  color: #d0d0d0;
  font: 400 12px/10px "Liberation Sans", sans-serif;
  text-align: center;
  border: 1px solid #c0c0c0;
}

.prop-name {
  flex: none;
  width: 145px;
  overflow: hidden;
  color: #c8c8c8;
}

.section .prop-name {
  color: #e8e8e8;
}

.prop-value {
  flex: 1;
  align-self: stretch;
  padding-left: 5px;
  line-height: 23px;
  color: #c8c8c8;
  background: #1f1f21;
}

.prop-value.strong {
  color: #f0f0f0;
  font-weight: 700;
}

.prop-desc {
  display: flex;
  flex-direction: column;
  gap: 3px;
  margin-top: auto;
  padding: 0 0 12px 7px;
  font-size: 14.500px;
  color: #dcdcdc;
}

.prop-desc b {
  font-weight: 700;
  font-size: 15px;
}

.side-tabs {
  display: flex;
  flex-direction: column;
  gap: 15px;
  flex: none;
  width: 40px;
}

.side-tab {
  padding-right: 13px;
  background: linear-gradient(90deg, transparent 32px, #353538 32px);
  color: #a8a8a8;
  font-size: 15px;
  line-height: 20px;
  writing-mode: vertical-rl;
}

/* ---------- 底部 ---------- */
.statusbar {
  position: relative;
  display: flex;
  align-items: flex-start;
  flex: none;
  height: 30px;
  background: #0070c8;
  color: #d6e9f8;
}

.status-save {
  width: 18px;
  height: 16px;
  margin: 7px 0 0 1389px;
}

.status-up {
  width: 11px;
  height: 15px;
  margin: 9px 0 0 426px;
}

.publish {
  margin: 5px 0 0 9px;
  font-size: 15px;
  line-height: 22px;
}

.status-tri {
  width: 0;
  height: 0;
  margin: 14px 0 0 9px;
  border-left: 5px solid transparent;
  border-right: 5px solid transparent;
  border-bottom: 5px solid #e8f3fb;
}

.progress {
  position: absolute;
  left: 12px;
  top: 22px;
  display: flex;
  width: 1896px;
  height: 3px;
}

.p-played {
  width: 1669px;
  background: #00a1d6;
}

.p-peek {
  width: 32px;
  background: #7fb8e0;
}

.p-rest {
  flex: 1;
  background: #3f8fd0;
}

.taskbar {
  position: relative;
  display: flex;
  align-items: center;
  flex: 1;
  background: linear-gradient(90deg, #121010, #1b1512 45%, #1d1511 75%, #161210);
}

.start-win {
  flex: none;
  width: 30px;
  height: 30px;
  margin-left: 19px;
}

.search-box {
  display: flex;
  align-items: center;
  flex: none;
  width: 430px;
  height: 49px;
  margin-left: 11px;
  background: linear-gradient(#c4c4c4, #a8a8a8 40%, #5e5e5e);
}

.big-play {
  flex: none;
  width: 30px;
  height: 30px;
  margin-left: 11px;
}

.search-text {
  margin-left: 9px;
  color: #2c2c2c;
  font-size: 19px;
  white-space: nowrap;
}

.mic {
  width: 16px;
  height: 24px;
  margin-left: auto;
  margin-right: 18px;
}

.task-view {
  flex: none;
  width: 14px;
  height: 20px;
  margin-left: 20px;
}

.dm-toggle {
  display: flex;
  align-items: center;
  justify-content: flex-end;
  flex: none;
  width: 29px;
  height: 19px;
  margin-left: 1px;
  padding-right: 2px;
  border-radius: 10px;
  background: #00a1d6;
}

.dm-toggle span {
  width: 15px;
  height: 15px;
  color: #00a1d6;
  font-size: 10px;
  line-height: 15px;
  text-align: center;
  border-radius: 50%;
  background: #fff;
}

.settings-ico {
  flex: none;
  width: 30px;
  height: 30px;
  margin-left: 20px;
}

.slots {
  display: flex;
  gap: 10px;
  flex: none;
  height: 49px;
  margin-left: 78px;
}

.slot {
  display: flex;
  align-items: center;
  justify-content: center;
  width: 52px;
  height: 49px;
  padding-bottom: 3px;
  border-bottom: 2px solid #2b4a68;
}

.slot.current {
  background: #3a3835;
}

.slot svg {
  width: 30px;
  height: 30px;
}

.tray-dots {
  position: relative;
  display: flex;
  margin-left: 458px;
}

.dot-green {
  width: 14px;
  height: 14px;
  border-radius: 50%;
  background: #4e9a3e;
}

.dot-grey {
  width: 12px;
  height: 12px;
  margin: 4px 0 0 -6px;
  border-radius: 50%;
  background: #a8a8a8;
}

.wifi {
  flex: none;
  width: 20px;
  height: 20px;
  margin: 4px 0 0 44px;
}

.ime {
  margin-left: 44px;
  color: #6e6e6e;
  font-size: 14px;
}

.time-label {
  position: absolute;
  left: 136px;
  top: 16px;
  color: #f2f2f2;
  font: 700 13.500px/18px "Liberation Sans", sans-serif;
  white-space: nowrap;
}

.dm-input {
  position: absolute;
  left: 633px;
  top: 7px;
  display: flex;
  align-items: center;
  width: 608px;
  height: 34px;
  border-radius: 2px;
  background: rgba(150, 150, 150, 0.55);
  color: rgba(240, 240, 240, 0.7);
  font-size: 12.500px;
}

.dm-bag {
  position: absolute;
  left: -1px;
  top: 1px;
  width: 28px;
  height: 30px;
  opacity: 0.8;
}

.dm-a {
  position: relative;
  width: 16px;
  margin-left: 8px;
  color: #fff;
  font: 500 16px/18px "Open Sans", sans-serif;
  text-align: center;
  border-bottom: 2px solid #fff;
}

.dm-hint {
  margin-left: 13px;
  white-space: nowrap;
}

.dm-rule {
  margin-left: auto;
  margin-right: 10px;
  white-space: nowrap;
}

.dm-send {
  width: 60px;
  height: 34px;
  color: #fff;
  font-size: 13px;
  line-height: 34px;
  text-align: center;
  border-radius: 0 2px 2px 0;
  background: #00a1d6;
}

.player-right {
  position: absolute;
  left: 1426px;
  top: 0;
  bottom: 0;
  display: flex;
  align-items: center;
}

.pr-text {
  color: #d8d8d8;
  font: 700 16px "Liberation Sans", "Noto Sans CJK SC", sans-serif;
  white-space: nowrap;
}

.pr-text.q {
  width: 82px;
}

.pr-text.ep {
  width: 32px;
  margin-left: 21px;
}

.pr-text.speed {
  width: 32px;
  margin-left: 28px;
}

.pr-sub {
  position: relative;
  width: 31px;
  height: 22px;
  margin: 0 9px 0 30px;
  overflow: hidden;
  color: #222;
  font-size: 13px;
  line-height: 22px;
  text-align: center;
  border-radius: 3px;
  background: #eee;
}

.pr-sub i {
  position: absolute;
  left: -4px;
  top: 10px;
  width: 40px;
  height: 2px;
  background: #1a1512;
  transform: rotate(35deg);
}

.pr-vol {
  width: 18px;
  height: 24px;
  margin-left: 20px;
}

.pr-gear {
  width: 22px;
  height: 22px;
  margin-left: 31px;
}

.pr-pip {
  width: 23px;
  height: 25px;
  margin-left: 34px;
}

.pr-full {
  width: 23px;
  height: 23px;
  margin-left: 32px;
}

.clock,
.clock-date,
.blog-url {
  position: absolute;
  white-space: nowrap;
  font-family: "Liberation Sans", sans-serif;
}

.clock {
  left: 1727px;
  top: 4px;
  color: #9a9a9a;
  font-size: 15px;
}

.clock-date {
  left: 1714px;
  top: 29px;
  color: #7e7e7e;
  font-size: 14px;
}

.blog-url {
  left: 1666px;
  top: 21px;
  color: #c4c4c4;
  font-size: 15.500px;
  text-shadow: 0 0 1px #1a1512;
}

.video-title {
  position: absolute;
  left: 18px;
  top: 21px;
  color: #fff;
  font-size: 16.500px;
  font-weight: 500;
  line-height: 24px;
  letter-spacing: -0.400px;
  text-shadow: 0 0 2px #000;
  white-space: nowrap;
}

.help-bubble {
  position: absolute;
  left: 1871px;
  top: 22px;
  width: 20px;
  height: 20px;
}

.bili {
  position: absolute;
  left: 1826px;
  top: 927px;
  width: 56px;
  height: 54px;
}
</style>
